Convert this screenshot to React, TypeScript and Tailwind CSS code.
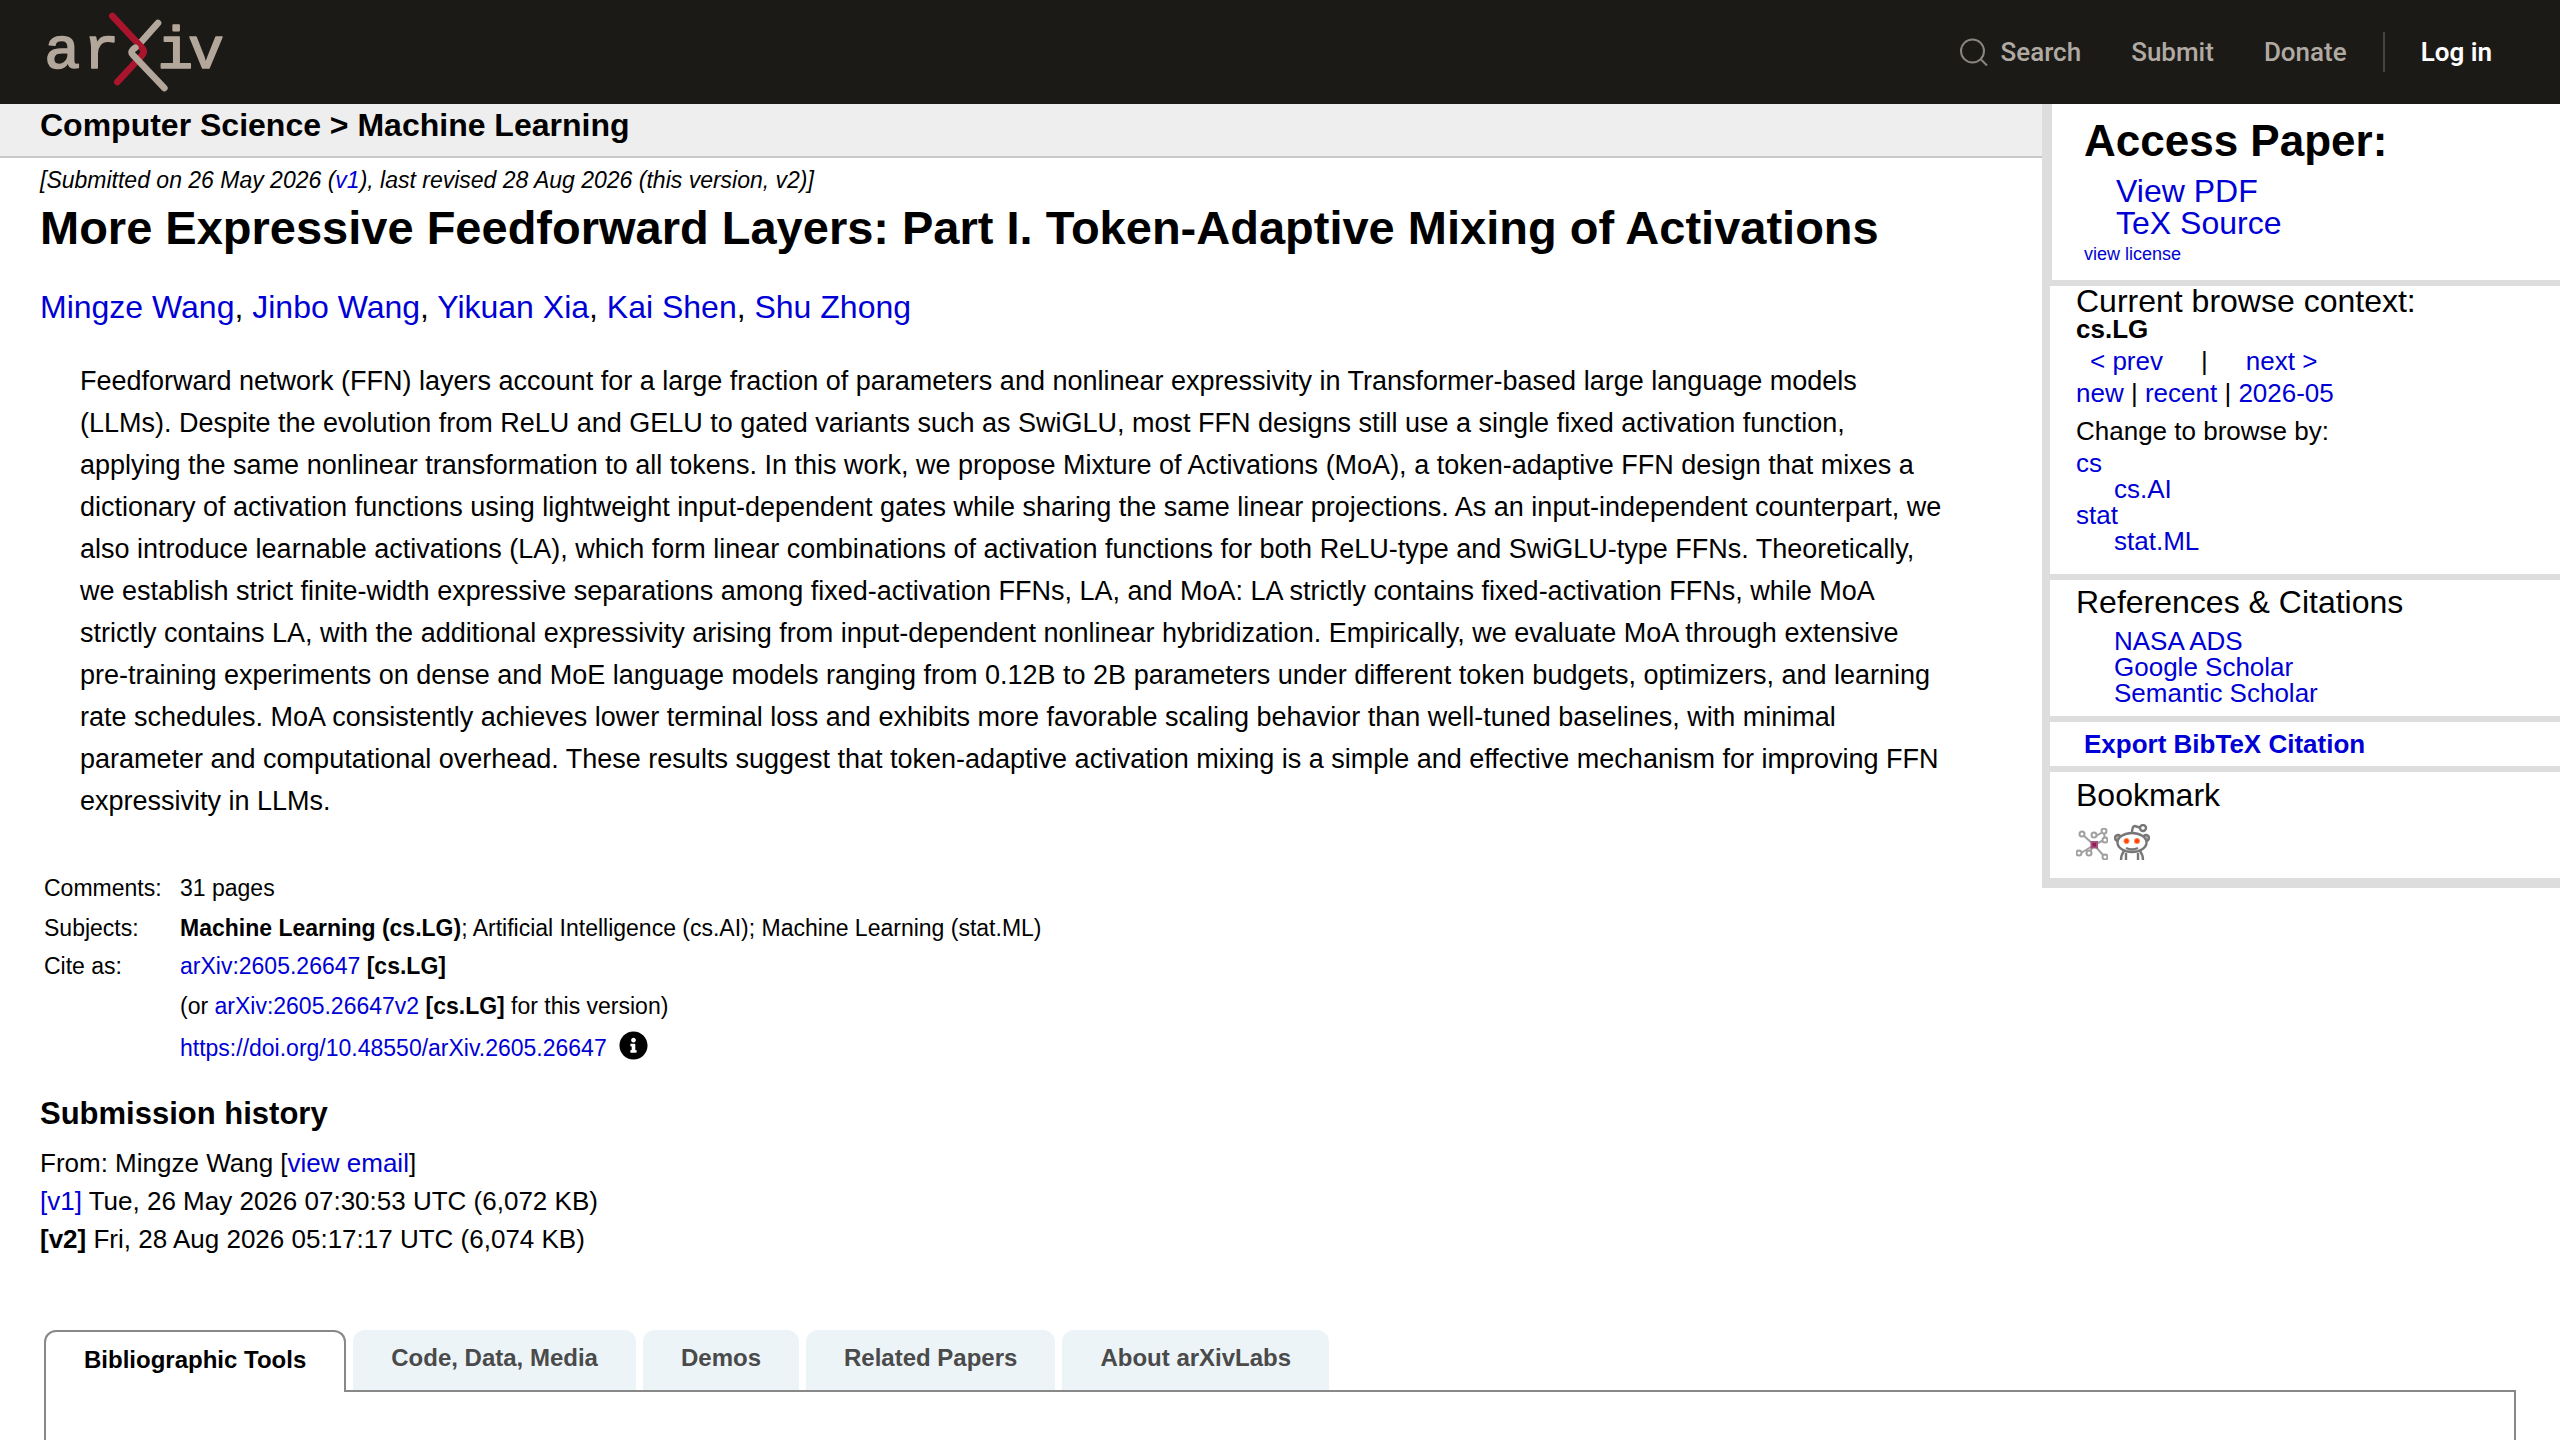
import { useState, type ReactNode } from 'react';
import { FaInfoCircle } from 'react-icons/fa';

const TABS = ['Bibliographic Tools', 'Code, Data, Media', 'Demos', 'Related Papers', 'About arXivLabs'];

const AUTHORS = ['Mingze Wang', 'Jinbo Wang', 'Yikuan Xia', 'Kai Shen', 'Shu Zhong'];

const ABSTRACT =
  'Feedforward network (FFN) layers account for a large fraction of parameters and nonlinear expressivity in Transformer-based large language models (LLMs). Despite the evolution from ReLU and GELU to gated variants such as SwiGLU, most FFN designs still use a single fixed activation function, applying the same nonlinear transformation to all tokens. In this work, we propose Mixture of Activations (MoA), a token-adaptive FFN design that mixes a dictionary of activation functions using lightweight input-dependent gates while sharing the same linear projections. As an input-independent counterpart, we also introduce learnable activations (LA), which form linear combinations of activation functions for both ReLU-type and SwiGLU-type FFNs. Theoretically, we establish strict finite-width expressive separations among fixed-activation FFNs, LA, and MoA: LA strictly contains fixed-activation FFNs, while MoA strictly contains LA, with the additional expressivity arising from input-dependent nonlinear hybridization. Empirically, we evaluate MoA through extensive pre-training experiments on dense and MoE language models ranging from 0.12B to 2B parameters under different token budgets, optimizers, and learning rate schedules. MoA consistently achieves lower terminal loss and exhibits more favorable scaling behavior than well-tuned baselines, with minimal parameter and computational overhead. These results suggest that token-adaptive activation mixing is a simple and effective mechanism for improving FFN expressivity in LLMs.';

function Link({ children, className = '' }: { children: ReactNode; className?: string }) {
  return (
    <a href="#" className={`text-[#0000d5] hover:underline ${className}`}>
      {children}
    </a>
  );
}

function Logo() {
  return (
    <svg viewBox="24 9 582 300" className="h-[100px] w-[194px]" role="img" aria-label="arXiv logo">
      <g
        fill="#b3a79b"
        stroke="#b3a79b"
        strokeWidth="5"
        strokeLinejoin="round"
        fontFamily="'Liberation Mono', monospace"
        fontSize="180"
      >
        <text x="43 160" y="207">
          ar
        </text>
        <text x="382 474" y="207">
          iv
        </text>
      </g>
      <g fill="none" strokeWidth="20" strokeLinecap="round" strokeLinejoin="round">
        <path d="M384 72 L326 137" stroke="#b3a79b" />
        <path d="M247 51 L336 146 Q346 157 337 168 L262 249" stroke="#aa142d" />
        <path d="M316 146 Q298 157 309 168 L403 267" stroke="#b3a79b" />
      </g>
    </svg>
  );
}

function SearchIcon() {
  return (
    <svg viewBox="0 0 28 28" className="size-7" fill="none" stroke="#8c857d" strokeWidth="2">
      <circle cx="12.5" cy="13" r="11.5" />
      <path d="M20.5 21 L27 27.5" />
    </svg>
  );
}

function BibSonomyIcon() {
  return (
    <svg viewBox="0 0 32 32" className="size-8" fill="none" stroke="#a0a0a0" strokeWidth="2">
      <path d="M18 17 L7 7 M18 17 L28 12 M18 17 L28 28 M18 17 L13 25 M18 17 L5 25 M20 8 L27 4 M28 5 L29 11" />
      <circle cx="6" cy="6" r="2.500" fill="#fff" />
      <circle cx="18" cy="7" r="2.500" fill="#fff" />
      <circle cx="28" cy="3" r="2.500" fill="#fff" />
      <circle cx="29" cy="12" r="2.500" fill="#fff" />
      <circle cx="29" cy="29" r="2.500" fill="#fff" />
      <circle cx="13" cy="25" r="2.500" fill="#fff" />
      <circle cx="3" cy="25" r="2.500" fill="#fff" />
      <rect x="15.500" y="14" width="5.500" height="5.500" fill="#8c1d55" stroke="#a4527d" />
    </svg>
  );
}

function RedditIcon() {
  return (
    <svg viewBox="0 0 36 36" className="size-9" fill="none" stroke="#777" strokeWidth="2.4">
      <path d="M18 9 Q18 2 21 2 L27 4" />
      <circle cx="29" cy="4" r="3" fill="#fff" />
      <circle cx="4" cy="14" r="3" fill="#bbb" />
      <circle cx="32" cy="14" r="3" fill="#bbb" />
      <path d="M10 27 Q7 31 7 36 M26 27 Q29 31 29 36 M12 29 V36 M24 29 V36" />
      <ellipse cx="18" cy="18.500" rx="14.500" ry="9.500" fill="#fff" />
      <path d="M12 24 Q18 27 24 24" />
      <circle cx="12.500" cy="17" r="2.600" fill="#ff4500" stroke="#ff8a60" strokeWidth="1" />
      <circle cx="23" cy="17" r="2.600" fill="#ff4500" stroke="#ff8a60" strokeWidth="1" />
    </svg>
  );
}

function Header() {
  return (
    <header className="flex h-[104px] items-center justify-between bg-[#1c1a17] pr-[68px] pl-[38px]">
      <a href="#">
        <Logo />
      </a>
      <nav className="flex items-center font-[Roboto,sans-serif] text-[26px] leading-8 font-medium text-[#b0aaa3]">
        <a href="#" className="flex items-center gap-3">
          <SearchIcon />
          Search
        </a>
        <a href="#" className="ml-[50px]">
          Submit
        </a>
        <a href="#" className="ml-[50px]">
          Donate
        </a>
        <span className="mx-9 h-10 w-0.5 bg-[#4a4440]" />
        <a href="#" className="font-semibold text-white">
          Log in
        </a>
      </nav>
    </header>
  );
}

function Sidebar() {
  return (
    <aside className="w-[518px] shrink-0 self-start border-b-[10px] border-l-8 border-[#ddd] text-[26px] leading-[26px]">
      <div className="border-l-2 border-[#ddd] pt-[11px] pb-[13px] pl-8">
        <h2 className="text-[44px] leading-[52px] font-bold">Access Paper:</h2>
        <ul className="mt-2 pl-8 text-[32px] leading-8">
          <li>
            <Link>View PDF</Link>
          </li>
          <li>
            <Link>TeX Source</Link>
          </li>
        </ul>
        <div className="mt-0.5 text-[18px] leading-[26px]">
          <Link>view license</Link>
        </div>
      </div>

      <div className="border-t-[6px] border-[#ddd] pb-5 pl-[26px]">
        <div className="text-[32px] leading-[30px]">Current browse context:</div>
        <div className="font-bold">cs.LG</div>
        <div className="mt-[3px] flex gap-[38px] pl-3.5 leading-8">
          <Link>&lt; prev</Link>
          <span>|</span>
          <Link>next &gt;</Link>
        </div>
        <div className="leading-8">
          <Link>new</Link> | <Link>recent</Link> | <Link>2026-05</Link>
        </div>
        <div className="mt-1.5 mb-[3px] leading-8">Change to browse by:</div>
        <ul>
          <li>
            <Link>cs</Link>
          </li>
          <li className="pl-[38px]">
            <Link>cs.AI</Link>
          </li>
          <li>
            <Link>stat</Link>
          </li>
          <li className="pl-[38px]">
            <Link>stat.ML</Link>
          </li>
        </ul>
      </div>

      <div className="border-t-[6px] border-[#ddd] pt-1 pb-2.5 pl-[26px]">
        <h3 className="text-[32px] leading-9">References &amp; Citations</h3>
        <ul className="mt-2 pl-[38px]">
          <li>
            <Link>NASA ADS</Link>
          </li>
          <li>
            <Link>Google Scholar</Link>
          </li>
          <li>
            <Link>Semantic Scholar</Link>
          </li>
        </ul>
      </div>

      <div className="border-t-[6px] border-[#ddd] pl-[34px] leading-[44px]">
        <button type="button" className="block cursor-pointer font-bold text-[#0000d5]">
          Export BibTeX Citation
        </button>
      </div>

      <div className="border-t-[6px] border-[#ddd] pt-[5px] pb-[18px] pl-[26px]">
        <h3 className="text-[32px] leading-9">Bookmark</h3>
        <div className="mt-[11px] flex items-end gap-1.5">
          <a href="#" aria-label="BibSonomy">
            <BibSonomyIcon />
          </a>
          <a href="#" aria-label="Reddit">
            <RedditIcon />
          </a>
        </div>
      </div>
    </aside>
  );
}

function MetaTable() {
  return (
    <table className="mt-[46px] ml-1 text-[23px] leading-10">
      <tbody>
        <tr>
          <td className="w-[136px]">Comments:</td>
          <td>31 pages</td>
        </tr>
        <tr>
          <td>Subjects:</td>
          <td>
            <b>Machine Learning (cs.LG)</b>; Artificial Intelligence (cs.AI); Machine Learning (stat.ML)
          </td>
        </tr>
        <tr className="leading-9">
          <td>Cite as:</td>
          <td>
            <Link>arXiv:2605.26647</Link> <b>[cs.LG]</b>
          </td>
        </tr>
        <tr className="leading-[44px]">
          <td />
          <td>
            (or <Link>arXiv:2605.26647v2</Link> <b>[cs.LG]</b> for this version)
          </td>
        </tr>
        <tr>
          <td />
          <td>
            <div className="flex gap-3">
              <Link>https://doi.org/10.48550/arXiv.2605.26647</Link>
              <button type="button" aria-label="Focus to learn more" className="self-start pt-[3px]">
                <FaInfoCircle className="size-[29px]" />
              </button>
            </div>
          </td>
        </tr>
      </tbody>
    </table>
  );
}

function LabsTabs() {
  const [active, setActive] = useState(0);

  return (
    <section className="mx-11 mt-[72px]">
      <div role="tablist" className="flex gap-[7px]">
        {TABS.map((label, i) => (
          <button
            key={label}
            type="button"
            role="tab"
            aria-selected={i === active}
            onClick={() => setActive(i)}
            className={
              i === active
                ? 'z-10 -mb-0.5 h-[62px] rounded-t-xl border-2 border-b-0 border-[#888] bg-white px-[38px] pb-1 text-[24px] leading-[56px] font-bold text-black'
                : 'h-[60px] cursor-pointer rounded-t-xl bg-[#ecf4f8] px-[38px] pb-1 text-[24px] leading-[56px] font-bold text-[#4a4a4a]'
            }
          >
            {label}
          </button>
        ))}
      </div>
      <div role="tabpanel" className="h-40 border-2 border-[#888]" />
    </section>
  );
}

export default function App() {
  return (
    <div className="h-screen overflow-hidden bg-white font-['Liberation_Sans',Arial,sans-serif] text-black">
      <Header />
      <div className="flex">
        <main className="min-w-0 flex-1">
          <div className="border-b-2 border-[#c8c8c8] bg-[#eee] pt-0.5 pb-3 pl-10 text-[32px] leading-[38px] font-bold">
            Computer Science &gt; Machine Learning
          </div>
          <div className="px-10 pt-2">
            <div className="text-[23px] leading-7 italic">
              [Submitted on 26 May 2026 (<Link>v1</Link>), last revised 28 Aug 2026 (this version, v2)]
            </div>
            <h1 className="mt-1.5 text-[47px] leading-[56px] font-bold">
              More Expressive Feedforward Layers: Part I. Token-Adaptive Mixing of Activations
            </h1>
            <div className="mt-[31px] text-[32px] leading-10">
              {AUTHORS.map((name, i) => (
                <span key={name}>
                  {i > 0 && ', '}
                  <Link>{name}</Link>
                </span>
              ))}
            </div>
            <blockquote className="mt-[33px] mr-[52px] ml-10 text-[27px] leading-[42px]">{ABSTRACT}</blockquote>
            <MetaTable />
            <section className="mt-[26px] text-[26px] leading-[38px]">
              <h2 className="mb-2.5 text-[31px] leading-10 font-bold">Submission history</h2>
              <div>
                From: Mingze Wang [<Link>view email</Link>]
              </div>
              <div>
                <Link>[v1]</Link> Tue, 26 May 2026 07:30:53 UTC (6,072 KB)
              </div>
              <div>
                <b>[v2]</b> Fri, 28 Aug 2026 05:17:17 UTC (6,074 KB)
              </div>
            </section>
          </div>
        </main>
        <Sidebar />
      </div>
      <LabsTabs />
    </div>
  );
}
